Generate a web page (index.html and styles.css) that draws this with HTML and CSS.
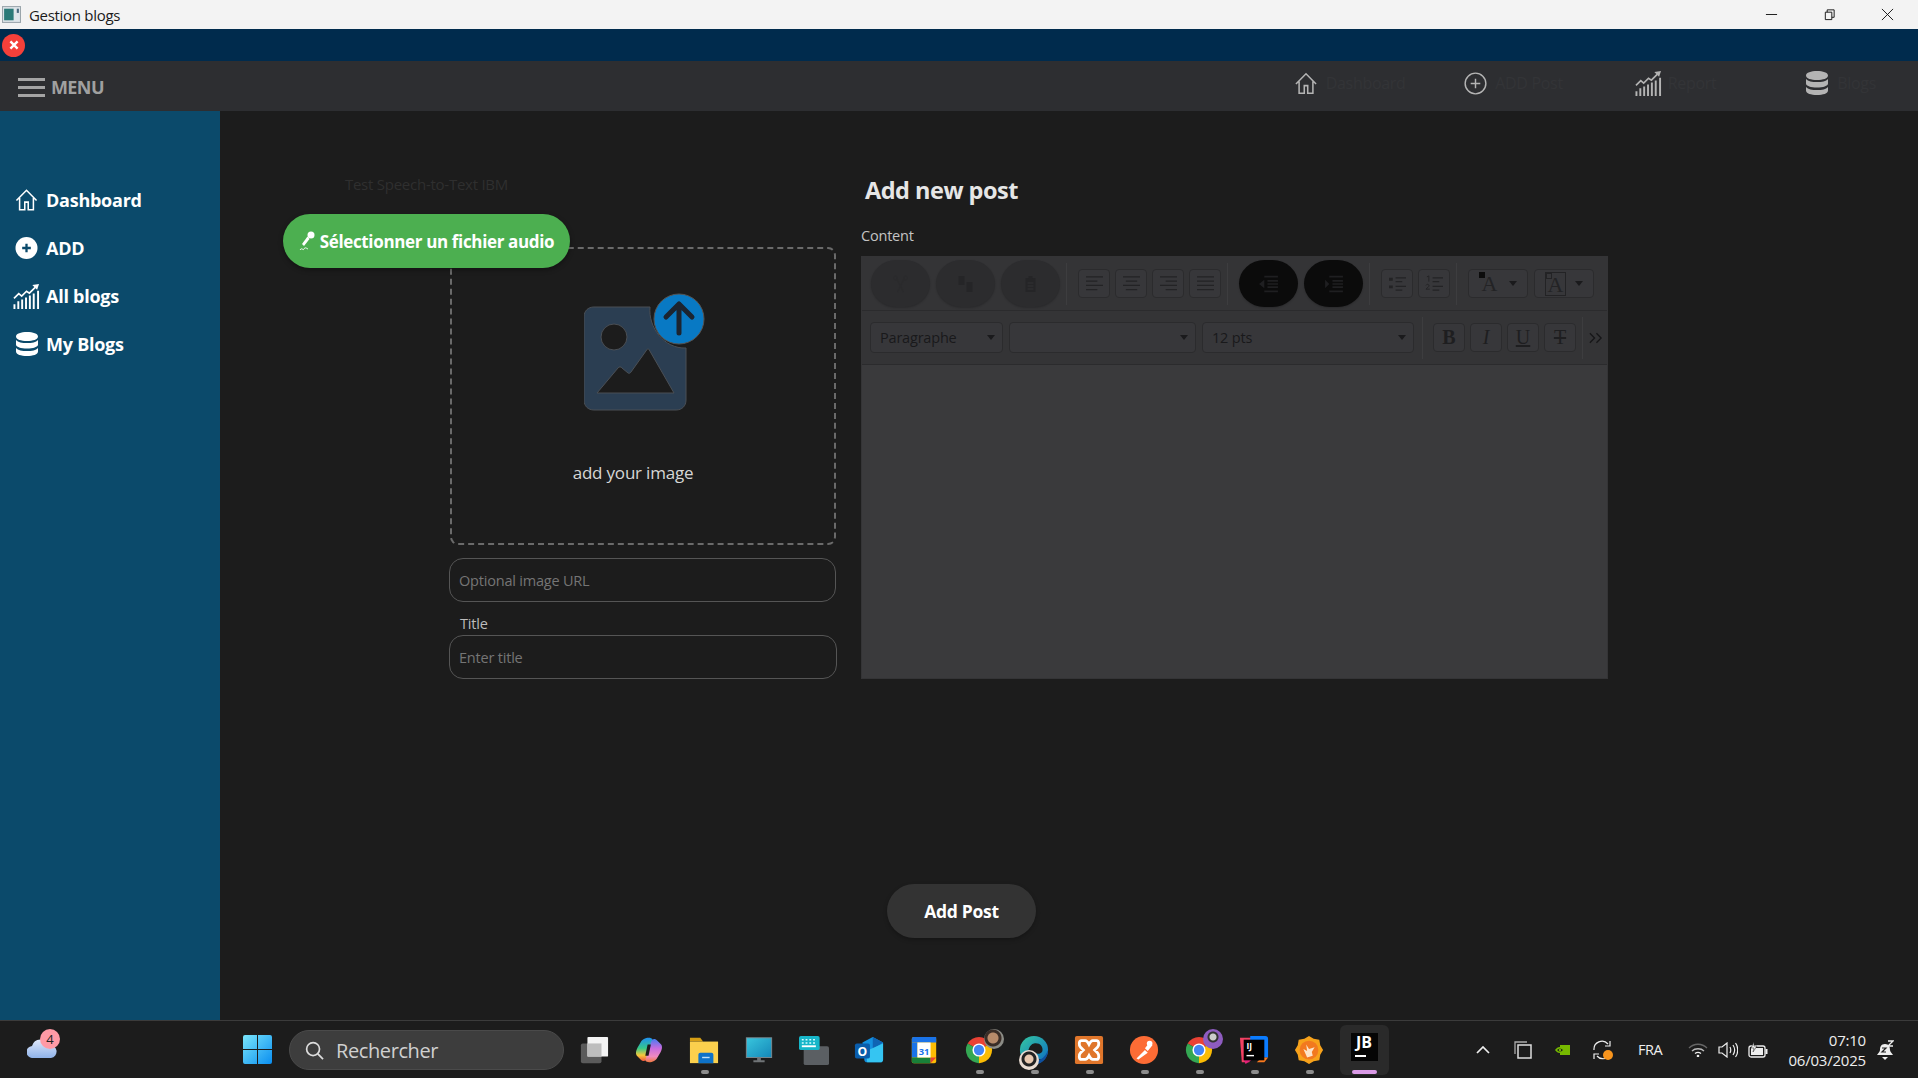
FILE: index.html
```html
<!DOCTYPE html>
<html lang="fr">
<head>
<meta charset="utf-8">
<title>Gestion blogs</title>
<link rel="stylesheet" href="styles.css">
</head>
<body>
<svg class="defs" width="0" height="0" aria-hidden="true">
  <symbol id="i-home" viewBox="0 0 24 24"><path d="M1.500 12.500 12 1.800l10.500 10.700M4.800 10v12.200h5.400v-8h3.600v8h5.400V10" fill="none" stroke="currentColor" stroke-width="1.600"/></symbol>
  <symbol id="i-plus" viewBox="0 0 24 24"><circle cx="12" cy="12" r="10.800" fill="none" stroke="currentColor" stroke-width="1.500"/><path d="M12 7v10M7 12h10" stroke="currentColor" stroke-width="1.500"/></symbol>
  <symbol id="i-plus-solid" viewBox="0 0 24 24"><circle cx="12" cy="12" r="11.500" fill="currentColor"/><path d="M12 7.500v9M7.500 12h9" stroke="#0b4a6b" stroke-width="2.400"/></symbol>
  <symbol id="i-chart" viewBox="0 0 28 28"><path d="M1.500 27v-5M5.500 27v-8M9.500 27V17M13.500 27V15M17.500 27V13M21.500 27V11M26 27V8" fill="none" stroke="currentColor" stroke-width="2"/><path d="M1 16l5-5 3 2.500 5-5 3 2 6-6" fill="none" stroke="currentColor" stroke-width="1.700"/><path d="M27 1l-7 1 5 5z" fill="currentColor"/></symbol>
  <symbol id="i-db" viewBox="0 0 24 26"><path d="M1 5.500C1 2.500 6 1 12 1s11 1.500 11 4.500S18 10 12 10 1 8.500 1 5.500zM1 9c2 2.500 6 3 11 3s9-.5 11-3v4.500c0 2.500-5 4-11 4s-11-1.500-11-4zM1 17c2 2.500 6 3 11 3s9-.5 11-3v3.500c0 3-5 4.500-11 4.500s-11-1.500-11-4.500z" fill="currentColor"/></symbol>
  <symbol id="i-chrome" viewBox="0 0 32 32"><path d="M16 16 3.900 9A14 14 0 0 1 28.100 9z" fill="#e94235"/><path d="M16 16 28.100 9A14 14 0 0 1 16 30z" fill="#fbbc04"/><path d="M16 16V30A14 14 0 0 1 3.900 9z" fill="#34a853"/><circle cx="16" cy="16" r="7" fill="#fff"/><circle cx="16" cy="16" r="5.500" fill="#4285f4"/></symbol>
</svg>

<div class="app-window">
  <header class="titlebar">
    <div class="title-left">
      <svg class="title-icon" viewBox="0 0 18 16"><rect x=".5" y=".5" width="17" height="15" fill="#dfe6ea" stroke="#9aa5ab"/><rect x="2" y="2.500" width="9" height="11" fill="#2b7a78"/><rect x="14" y="2.500" width="2" height="4" fill="#4a6a80"/></svg>
      <span class="title-text">Gestion blogs</span>
    </div>
    <div class="win-controls">
      <svg class="win-btn" viewBox="0 0 14 14"><path d="M1 7h12" stroke="#111" stroke-width="1"/></svg>
      <svg class="win-btn" viewBox="0 0 14 14"><path d="M2.500 4.500h7v8h-7zM4.500 4.500V2h7.500v8h-2.500" fill="none" stroke="#111"/></svg>
      <svg class="win-btn" viewBox="0 0 14 14"><path d="M1 1l12 12M13 1 1 13" stroke="#111"/></svg>
    </div>
  </header>

  <div class="navy-strip">
    <span class="close-dot"><svg viewBox="0 0 10 10"><path d="M2 2l6 6M8 2 2 8" stroke="#fff" stroke-width="2"/></svg></span>
  </div>

  <div class="topbar">
    <div class="menu-toggle">
      <span class="burger"><i></i><i></i><i></i></span>
      <span class="menu-label">MENU</span>
    </div>
    <nav class="top-nav">
      <a class="top-item"><svg class="ti ti-home"><use href="#i-home"/></svg><span>Dashboard</span></a>
      <a class="top-item"><svg class="ti ti-plus"><use href="#i-plus"/></svg><span>ADD Post</span></a>
      <a class="top-item"><svg class="ti ti-chart"><use href="#i-chart"/></svg><span>Report</span></a>
      <a class="top-item"><svg class="ti ti-db"><use href="#i-db"/></svg><span>Blogs</span></a>
    </nav>
  </div>

  <div class="body-row">
    <aside class="sidebar">
      <a class="side-item"><span class="side-ic"><svg class="si-home"><use href="#i-home"/></svg></span>Dashboard</a>
      <a class="side-item"><span class="side-ic"><svg class="si-home"><use href="#i-plus-solid"/></svg></span>ADD</a>
      <a class="side-item"><span class="side-ic"><svg class="si-chart"><use href="#i-chart"/></svg></span>All blogs</a>
      <a class="side-item"><span class="side-ic"><svg class="si-db"><use href="#i-db"/></svg></span>My Blogs</a>
    </aside>

    <main class="main">
      <div class="audio-box">
        <div class="audio-title">Test Speech-to-Text IBM</div>
        <button class="audio-btn">
          <svg class="mic" viewBox="0 0 16 20"><circle cx="12" cy="4" r="3.500" fill="#fff"/><path d="M8.500 5.500 10.500 8 5 15 3 13z" fill="#fff"/><path d="M1 19c2-3 3 1 4-1s2-1 4 0" fill="none" stroke="#fff"/></svg>
          Sélectionner un fichier audio
        </button>
      </div>

      <div class="form-row">
        <section class="col-left">
          <div class="dropzone">
            <svg class="upload" viewBox="0 0 121 118">
              <path d="M10 14h56c-2 20 14 42 36 41v52c0 6-4 10-10 10H10C4 117 0 113 0 107V24C0 18 4 14 10 14z" fill="#2b3e52" stroke="#4a4f55"/>
              <circle cx="30" cy="44" r="13" fill="#1c1c1c" stroke="#4a4f55"/>
              <path d="M13 100 34 75c1-1.500 3-1.500 4 0l6 5c1 .5 2 .5 3-1l16-22.500c.5-.8 1.500-.8 2 0L90 100z" fill="#1c1c1c" stroke="#4a4f55"/>
              <circle cx="95" cy="26" r="25" fill="#0879c4" stroke="#555"/>
              <path d="M95 40V11M82 24 95 11l13 13" fill="none" stroke="#1c2430" stroke-width="5" stroke-linecap="round" stroke-linejoin="round"/>
            </svg>
            <div class="drop-text">add your image</div>
          </div>
          <input class="field" placeholder="Optional image URL">
          <label class="field-label">Title</label>
          <input class="field field-title" placeholder="Enter title">
        </section>

        <section class="col-right">
          <h1 class="heading">Add new post</h1>
          <div class="content-label">Content</div>
          <div class="editor">
            <div class="tb-row tb-one">
              <div class="tb-group gap6">
                <span class="oval"><svg class="oi" viewBox="0 0 20 20"><path d="M6 4l7 14M14 4 7 18" stroke="#2a2a2c" stroke-width="1.200"/><circle cx="5" cy="4" r="2" fill="none" stroke="#2a2a2c"/><circle cx="15" cy="4" r="2" fill="none" stroke="#2a2a2c"/></svg></span>
                <span class="oval"><svg class="oi" viewBox="0 0 20 20"><path d="M3 2h6v9H3zM11 8h6v10h-6z" fill="#252527"/></svg></span>
                <span class="oval"><svg class="oi" viewBox="0 0 20 20"><path d="M5 4h10v14H5z" fill="#252527"/><path d="M8 2h4v3H8z" fill="#252527"/><path d="M7 9h6M7 12h6M7 15h6" stroke="#333335"/></svg></span>
              </div>
              <i class="sep"></i>
              <div class="tb-group gap5">
                <span class="sq"><svg class="li" viewBox="0 0 20 18"><path d="M1 2h18M1 6.500h12M1 11h18M1 15.500h12" stroke="#232325" stroke-width="1.300"/></svg></span>
                <span class="sq"><svg class="li" viewBox="0 0 20 18"><path d="M1 2h18M4 6.500h12M1 11h18M4 15.500h12" stroke="#232325" stroke-width="1.300"/></svg></span>
                <span class="sq"><svg class="li" viewBox="0 0 20 18"><path d="M1 2h18M7 6.500h12M1 11h18M7 15.500h12" stroke="#232325" stroke-width="1.300"/></svg></span>
                <span class="sq"><svg class="li" viewBox="0 0 20 18"><path d="M1 2h18M1 6.500h18M1 11h18M1 15.500h18" stroke="#232325" stroke-width="1.300"/></svg></span>
              </div>
              <i class="sep"></i>
              <div class="tb-group gap6">
                <span class="oval oval-black"><svg class="oi" viewBox="0 0 20 18"><path d="M1 9l5-4v8z" fill="#1f1f21"/><path d="M6 2h13M9 6h10M9 9h10M9 12h10M6 16h13" stroke="#1f1f21" stroke-width="1.500"/></svg></span>
                <span class="oval oval-black"><svg class="oi" viewBox="0 0 20 18"><path d="M6 9 2 5v8z" fill="#1f1f21"/><path d="M6 2h13M9 6h10M9 9h10M9 12h10M6 16h13" stroke="#1f1f21" stroke-width="1.500"/></svg></span>
              </div>
              <i class="sep"></i>
              <div class="tb-group gap5">
                <span class="sq"><svg class="li" viewBox="0 0 20 18"><path d="M1 3h4v3H1zM1 11h4v3H1z" fill="#232325"/><path d="M8 3h11M8 7h7M8 12h11M8 16h7" stroke="#232325" stroke-width="1.300"/></svg></span>
                <span class="sq"><svg class="li" viewBox="0 0 20 18"><path d="M8 3h11M8 7h7M8 12h11M8 16h7" stroke="#232325" stroke-width="1.300"/><path d="M2 2l2-1v6M1 11c1-2 4-1 3 1l-3 3h4" fill="none" stroke="#232325"/></svg></span>
              </div>
              <i class="sep"></i>
              <div class="tb-group gap6">
                <span class="sq sq-wide"><span class="color-a"><i class="swatch"></i>A</span><i class="caret"></i></span>
                <span class="sq sq-wide"><span class="color-a color-box"><i class="swatch swatch-o"></i>A</span><i class="caret"></i></span>
              </div>
            </div>
            <div class="tb-row tb-two">
              <div class="tb-group gap6">
                <span class="sel sel-a">Paragraphe<i class="caret"></i></span>
                <span class="sel sel-b"><i class="caret"></i></span>
                <span class="sel sel-c">12 pts<i class="caret"></i></span>
              </div>
              <i class="sep sep-two"></i>
              <div class="tb-group gap5">
                <span class="sq fmt fmt-b">B</span>
                <span class="sq fmt fmt-i">I</span>
                <span class="sq fmt fmt-u">U</span>
                <span class="sq fmt fmt-s">T</span>
              </div>
              <i class="sep sep-last"></i>
              <svg class="more" viewBox="0 0 16 12"><path d="M2 1l5 5-5 5M9 1l5 5-5 5" fill="none" stroke="#161618" stroke-width="1.400"/></svg>
            </div>
            <div class="edit-area"></div>
          </div>
        </section>
      </div>

      <button class="submit">Add Post</button>
    </main>
  </div>

  <footer class="taskbar">
    <div class="weather">
      <svg class="cloud" viewBox="0 0 30 20"><defs><linearGradient id="gc" x1="0" y1="0" x2="0" y2="1"><stop offset="0" stop-color="#dfe8fb"/><stop offset="1" stop-color="#8fb2e8"/></linearGradient></defs><path d="M6 20a6 6 0 0 1-1-12 9 9 0 0 1 17-1 6.500 6.500 0 0 1 2 13z" fill="url(#gc)"/></svg>
      <span class="badge">4</span>
    </div>
    <svg class="start" viewBox="0 0 29 29"><defs><linearGradient id="gs" x1="0" y1="0" x2="1" y2="1"><stop offset="0" stop-color="#7ae6fb"/><stop offset="1" stop-color="#0a8ef0"/></linearGradient></defs><path d="M0 2a2 2 0 0 1 2-2h12v14H0zM15 0h12a2 2 0 0 1 2 2v12H15zM0 15h14v14H2a2 2 0 0 1-2-2zM15 15h14v12a2 2 0 0 1-2 2H15z" fill="url(#gs)"/></svg>
    <div class="search">
      <svg class="search-ic" viewBox="0 0 20 20"><circle cx="8.500" cy="8.500" r="6.800" fill="none" stroke="#ddd" stroke-width="1.800"/><path d="M13.500 13.500 19 19" stroke="#ddd" stroke-width="1.800"/></svg>
      <span>Rechercher</span>
    </div>
    <div class="apps">
      <span class="tapp"><svg class="ai" viewBox="0 0 32 32"><rect x="2" y="9" width="22" height="21" rx="2" fill="#5b5b5b"/><rect x="9" y="2" width="22" height="21" rx="1" fill="#f4f4f4"/><rect x="9" y="9" width="15" height="14" fill="#bdbdbd"/></svg></span>
      <span class="tapp"><svg class="ai" viewBox="0 0 32 32"><defs><linearGradient id="gp1" x1="0" y1="0" x2="0" y2="1"><stop offset="0" stop-color="#1f8ff0"/><stop offset=".45" stop-color="#35c98a"/><stop offset=".75" stop-color="#f6c93a"/><stop offset="1" stop-color="#f0563b"/></linearGradient><linearGradient id="gp2" x1="0" y1="0" x2="0" y2="1"><stop offset="0" stop-color="#4a7cf0"/><stop offset=".4" stop-color="#c86ce0"/><stop offset=".75" stop-color="#f08ac0"/><stop offset="1" stop-color="#f0783b"/></linearGradient></defs><path d="M7 8c2-5 11-7 13-3l-6 19c-1 4-4 5-7 2l-4-4C1 19 3 15 4 13z" fill="url(#gp1)"/><path d="M25 24c-2 5-11 7-13 3l6-19c1-4 4-5 7-2l4 4c2 3 0 7-1 9z" fill="url(#gp2)"/><path d="M14.500 10h3.500l-2.500 12H12z" fill="#1c1c1c"/></svg></span>
      <span class="tapp run"><svg class="ai" viewBox="0 0 32 32"><path d="M1 3h11l3 4H1z" fill="#d79f15"/><path d="M1 7h30v23H1z" fill="#fbd04d"/><path d="M10 21c0-1 1-2 2-2h12c1 0 2 1 2 2v9H10z" fill="#0e72c8"/><path d="M14 24h8" stroke="#bfe0f7" stroke-width="1.500"/></svg></span>
      <span class="tapp"><svg class="ai" viewBox="0 0 32 32"><defs><linearGradient id="gm" x1="0" y1="0" x2="1" y2="1"><stop offset="0" stop-color="#39c6dd"/><stop offset="1" stop-color="#1487b8"/></linearGradient></defs><rect x="2.500" y="3" width="27" height="21" fill="url(#gm)" stroke="#7d8a90"/><path d="M14 24h4v3h4v2H10v-2h4z" fill="#6f7376"/></svg></span>
      <span class="tapp"><svg class="ai" viewBox="0 0 32 32"><rect x="5" y="12" width="27" height="20" rx="2" fill="#5b5f63"/><rect x="0" y="1" width="22" height="15" rx="2" fill="#17b6c9"/><path d="M3 5h2M7 5h2M11 5h2M15 5h2M3 8.500h2M7 8.500h2M11 8.500h2M15 8.500h2" stroke="#d8fbff" stroke-width="1.500"/><path d="M3 12h15" stroke="#fff" stroke-width="2"/></svg></span>
      <span class="tapp"><svg class="ai" viewBox="0 0 32 32"><path d="M9 8 20 2l11 6v18a3 3 0 0 1-3 3H14a3 3 0 0 1-3-3z" fill="#1490df"/><path d="M20 2l11 6-11 7z" fill="#0f64b4"/><path d="M13 17 31 9v17a3 3 0 0 1-3 3H14z" fill="#35c5f2"/><rect x="1" y="9" width="16" height="16" rx="2" fill="#0a5dab"/><text class="o-letter" x="9" y="22" text-anchor="middle">O</text></svg></span>
      <span class="tapp"><svg class="ai" viewBox="0 0 32 32"><rect x="3" y="2" width="26" height="28" rx="2" fill="#fbbc04"/><path d="M3 4a2 2 0 0 1 2-2h24v6H3z" fill="#1a73e8"/><path d="M3 8h6v16H3z" fill="#1a73e8"/><path d="M3 24h20v6H5a2 2 0 0 1-2-2z" fill="#188038"/><path d="M23 24h6l-6 6z" fill="#ea4335"/><rect x="9" y="8" width="14" height="16" fill="#fff"/><text class="cal" x="16" y="21" text-anchor="middle">31</text></svg></span>
      <span class="tapp run"><svg class="ai" viewBox="0 0 32 32"><use href="#i-chrome"/></svg><i class="avatar avatar-a"></i></span>
      <span class="tapp run"><svg class="ai" viewBox="0 0 32 32"><defs><linearGradient id="ge" x1="0" y1="0" x2="1" y2="1"><stop offset="0" stop-color="#35c8a0"/><stop offset="1" stop-color="#0c6bc4"/></linearGradient></defs><circle cx="16" cy="16" r="15" fill="url(#ge)"/><path d="M16 9c6-1 10 3 9 8-1 3-5 4-9 2 1 5 5 8 9 7-6 5-13 1-15-4-1-5 1-12 6-13z" fill="#1c1c1c"/><path d="M31 16c0 8-6 15-13 15l-2-5c5 2 11 0 15-10z" fill="#0e4f9e"/></svg><i class="avatar avatar-b"></i></span>
      <span class="tapp run"><svg class="ai" viewBox="0 0 32 32"><rect x="1" y="1" width="30" height="30" rx="2" fill="#e0762b"/><path d="M8 6h4c2 0 3 2 4 4 1-2 2-4 4-4h4c3 0 3 5 1 7l-3 3 3 3c2 2 2 7-1 7h-4c-2 0-3-2-4-4-1 2-2 4-4 4H8c-3 0-3-5-1-7l3-3-3-3c-2-2-2-7 1-7z" fill="none" stroke="#fff" stroke-width="3"/></svg></span>
      <span class="tapp run"><svg class="ai" viewBox="0 0 32 32"><circle cx="16" cy="16" r="15" fill="#fd6c35"/><path d="M8 25l9-9 3 3-10 7zM17 14l5-6 3 3-5 6z" fill="#fff"/><circle cx="22" cy="9" r="3" fill="#fff"/></svg></span>
      <span class="tapp run"><svg class="ai" viewBox="0 0 32 32"><use href="#i-chrome"/></svg><i class="avatar avatar-c"></i></span>
      <span class="tapp run"><svg class="ai" viewBox="0 0 32 32"><path d="M1 3h12l-2 26H3z" fill="#f24063"/><path d="M12 1h16a3 3 0 0 1 3 3v20H12z" fill="#0b7cff"/><path d="M24 24h7l-4 5h-8z" fill="#f97a1f"/><path d="M4 24l9 3-6 4z" fill="#e5207b"/><rect x="5" y="5" width="22" height="22" fill="#000"/><text class="ij" x="8" y="15">IJ</text><path d="M8 22h8" stroke="#fff" stroke-width="1.500"/></svg></span>
      <span class="tapp run"><svg class="ai" viewBox="0 0 32 32"><path d="M16 1l5 3 6 1 1 6 3 5-3 5-1 6-6 1-5 3-5-3-6-1-1-6-3-5 3-5 1-6 6-1z" fill="#f7a21b"/><circle cx="16" cy="16" r="10" fill="#f2791f"/><path d="M10 15l4 2-1-7 3 5 6-2-3 5 1 4-6 2z" fill="#fde3c9"/></svg></span>
      <span class="tapp run run-pink"><span class="jb"><b>JB</b></span></span>
    </div>
    <div class="tray">
      <svg class="t-chev" viewBox="0 0 14 8"><path d="M1 7l6-6 6 6" fill="none" stroke="#eee" stroke-width="1.700"/></svg>
      <svg class="t-copy" viewBox="0 0 18 18"><path d="M1 13V1h12" fill="none" stroke="#aaa" stroke-width="1.300"/><rect x="4" y="4" width="13" height="13" fill="none" stroke="#ddd" stroke-width="1.500"/></svg>
      <svg class="t-nv" viewBox="0 0 15 10"><rect x="5" width="10" height="10" fill="#76b900"/><path d="M0 5c3-4 6-4 9 0-3 4-6 4-9 0z" fill="#76b900"/><path d="M2 5c2-2 4-2 6 0-2 2-4 2-6 0z" fill="#1c1c1c"/><circle cx="5" cy="5" r="1.200" fill="#76b900"/></svg>
      <svg class="t-sync" viewBox="0 0 20 20"><path d="M1 10a8 8 0 0 1 14-6M15 17a8 8 0 0 1-11-1" fill="none" stroke="#eee" stroke-width="1.200"/><path d="M17 1v5h-5M1 19v-5h5" fill="none" stroke="#eee" stroke-width="1.200"/><circle cx="15" cy="15" r="5" fill="#f7941d"/></svg>
      <span class="t-lang">FRA</span>
      <svg class="t-wifi" viewBox="0 0 20 14"><path d="M1 5c5-5 13-5 18 0" fill="none" stroke="#666" stroke-width="1.300"/><path d="M4 8c3-3 9-3 12 0" fill="none" stroke="#bbb" stroke-width="1.300"/><path d="M7 10.500c2-1.500 4-1.500 6 0" fill="none" stroke="#eee" stroke-width="1.300"/><circle cx="10" cy="13" r="1.300" fill="#eee"/></svg>
      <svg class="t-vol" viewBox="0 0 20 16"><path d="M1 5h3l5-4v14l-5-4H1z" fill="none" stroke="#eee" stroke-width="1.200"/><path d="M12 5c1 2 1 4 0 6M15 3c2 3 2 7 0 10M17.500 1c3 4 3 10 0 14" fill="none" stroke="#eee" stroke-width="1.200"/></svg>
      <svg class="t-bat" viewBox="0 0 20 16"><rect x="1" y="4" width="16" height="11" rx="2" fill="none" stroke="#eee" stroke-width="1.300"/><rect x="3" y="6" width="12" height="7" fill="#eee"/><rect x="17.500" y="7" width="2" height="5" fill="#eee"/><path d="M6 0 3 6h3l-1 4 4-6H6z" fill="#eee" stroke="#1c1c1c" stroke-width=".5"/></svg>
      <div class="clock"><span>07:10</span><span>06/03/2025</span></div>
      <svg class="t-bell" viewBox="0 0 18 20"><path d="M9 4c-4 0-5 3-5 6 0 2-2 3-3 5h16c-1-2-3-3-3-5 0-3-1-6-5-6z" fill="#eee"/><path d="M6 17h6l-3 3z" fill="#eee"/><path d="M12 1h5l-5 5h5" fill="none" stroke="#eee" stroke-width="1.300"/><path d="M6 8h4l-4 4h4" fill="none" stroke="#1c1c1c" stroke-width="1.200"/></svg>
    </div>
  </footer>
</div>
</body>
</html>
```

FILE: styles.css
```css
* { box-sizing: border-box; }
html, body { margin: 0; padding: 0; height: 100%; overflow: hidden; background: #1c1c1c; }
body { font-family: "Open Sans", "Noto Sans", sans-serif; }
.defs { position: absolute; }
.app-window { width: 1918px; height: 1078px; display: flex; flex-direction: column; }

/* Title bar */
.titlebar { height: 29px; background: #f3f3f3; display: flex; align-items: center; justify-content: space-between; flex: none; }
.title-left { display: flex; align-items: center; padding-left: 2px; }
.title-icon { width: 19px; height: 17px; }
.title-text { margin-left: 8px; font-size: 15px; color: #1a1a1a; letter-spacing: -0.3px; }
.win-controls { display: flex; gap: 45px; padding-right: 24px; }
.win-btn { width: 13px; height: 13px; }

/* Navy strip */
.navy-strip { height: 32px; background: #002b4d; display: flex; align-items: center; padding-left: 2px; flex: none; }
.close-dot { width: 23px; height: 23px; border-radius: 50%; background: #f4403a; display: flex; align-items: center; justify-content: center; }
.close-dot svg { width: 12px; height: 12px; }

/* Top bar */
.topbar { height: 50px; background: #2d2e31; display: flex; align-items: center; padding-left: 18px; flex: none; }
.menu-toggle { display: flex; align-items: center; gap: 6px; color: #a0a0a0; margin-top: 2px; }
.burger { display: flex; flex-direction: column; justify-content: space-between; width: 27px; height: 19px; }
.burger i { display: block; height: 3px; background: #a4a4a4; }
.menu-label { font-size: 18px; font-weight: 700; letter-spacing: -0.6px; }
.top-nav { margin: 0 0 6px auto; padding-right: 42px; display: grid; grid-template-columns: repeat(3, 170.5px) auto; align-items: center; }
.top-item { display: flex; align-items: center; color: #333437; font-size: 16px; letter-spacing: -0.3px; }
.ti { color: #b4b4b4; flex: none; }
.ti-home { width: 24px; height: 23px; margin-right: 8px; }
.ti-plus { width: 23px; height: 23px; margin-right: 8px; }
.ti-chart { width: 27px; height: 27px; margin-right: 6px; }
.ti-db { width: 24px; height: 26px; margin-right: 8px; }

/* Body */
.body-row { flex: 1; min-height: 0; display: flex; }
.sidebar { width: 220px; flex: none; background: #0b4a6b; padding: 65px 0 0 13px; }
.side-item { display: flex; align-items: center; height: 48px; color: #fff; font-size: 18px; font-weight: 700; letter-spacing: -0.25px; }
.side-ic { width: 33px; flex: none; display: flex; justify-content: center; padding-right: 6px; }
.side-ic svg { color: #fff; }
.si-home { width: 23px; height: 24px; }
.si-chart { width: 27px; height: 27px; }
.si-db { width: 24px; height: 26px; }

/* Main */
.main { flex: 1; position: relative; background: #1c1c1c; padding: 0 0 0 229px; }
.audio-box { position: absolute; left: 63px; top: 63px; width: 287px; display: flex; flex-direction: column; align-items: center; gap: 20px; z-index: 2; }
.audio-title { color: #2f2f2f; font-size: 15px; letter-spacing: -0.25px; }
.audio-btn { width: 287px; height: 54px; border: 0; border-radius: 27px; background: #4caf50; color: #fff; font: 700 17px "Open Sans", sans-serif; letter-spacing: -0.35px; display: flex; align-items: center; justify-content: center; gap: 5px; box-shadow: 0 2px 5px rgba(0,0,0,.35); }
.mic { width: 16px; height: 20px; }

.form-row { display: flex; gap: 25px; align-items: flex-start; }
.col-left { width: 387px; padding-top: 136px; flex: none; }
.dropzone { height: 298px; border: 2px dashed #6a6a6a; border-radius: 8px; display: flex; flex-direction: column; align-items: center; margin-left: 1px; }
.upload { width: 121px; height: 118px; margin: 44px 0 0 3px; flex: none; }
.drop-text { color: #d6d6d6; font-size: 17px; line-height: 24px; margin: 50px 0 0 -20px; letter-spacing: -0.2px; }
.field { display: block; width: 100%; height: 44px; margin-top: 13px; background: transparent; border: 1.500px solid #555; border-radius: 14px; padding: 0 9px; color: #ccc; font: 14.500px "Open Sans", sans-serif; outline: none; letter-spacing: -0.2px; }
.field::placeholder { color: #757575; opacity: 1; }
.field-label { display: block; color: #bdbdbd; font-size: 14.500px; line-height: 20px; margin: 12px 0 1px 11px; letter-spacing: -0.2px; }
.field-title { margin-top: 0; height: 44px; width: 388px; }

.col-right { width: 747px; padding-top: 63px; }
.heading { margin: 0 0 0 4px; color: #e6e6e6; font-size: 23.500px; font-weight: 700; line-height: 32px; letter-spacing: -0.5px; }
.content-label { color: #c4c4c4; font-size: 14.500px; line-height: 20px; margin-top: 20px; letter-spacing: -0.2px; }
.editor { margin-top: 10px; height: 423px; display: flex; flex-direction: column; background: #3a3a3c; border: 1px solid #343436; }

.tb-row { display: flex; align-items: center; background: #343436; padding-left: 9px; flex: none; }
.tb-one { height: 54px; border-bottom: 1px solid #2b2b2d; }
.tb-two { height: 54px; border-bottom: 1px solid #2b2b2d; padding-left: 8px; }
.tb-group { display: flex; align-items: center; }
.gap5 { gap: 5px; }
.gap6 { gap: 6px; }
.sep { display: block; width: 1px; height: 42px; background: #3d3d3f; margin: 0 11px 0 6px; flex: none; }
.sep-two { margin: 0 10px 0 8px; }
.sep-last { margin: 0 5px 0 6px; }
.oval { width: 59px; height: 47px; border-radius: 26px / 24px; background: #2c2c2e; display: flex; align-items: center; justify-content: center; box-shadow: 0 1px 2px rgba(0,0,0,.2); }
.oval-black { background: #0b0b0b; }
.oi { width: 21px; height: 20px; }
.sq { width: 32px; height: 29px; border: 1px solid #2b2b2d; border-radius: 4px; background: #37373a; display: flex; align-items: center; justify-content: center; color: #232325; }
.sq-wide { width: 60px; gap: 9px; }
.li { width: 19px; height: 17px; }
.caret { display: block; width: 0; height: 0; border-left: 4px solid transparent; border-right: 4px solid transparent; border-top: 5px solid #1a1a1c; }
.color-a { position: relative; width: 21px; height: 24px; font: 22px/24px "Liberation Serif", serif; color: #232325; text-align: center; }
.swatch { position: absolute; left: 0; top: 0; width: 6px; height: 6px; background: #0c0c0c; }
.swatch-o { background: transparent; border: 1px solid #232325; }
.color-box { border: 1px solid #232325; }
.sel { height: 31px; border: 1px solid #2b2b2d; border-radius: 4px; background: #37373a; display: flex; align-items: center; justify-content: space-between; padding: 0 7px 0 9px; color: #19191b; font-size: 14.500px; letter-spacing: -0.2px; }
.sel-a { width: 133px; }
.sel-b { width: 187px; justify-content: flex-end; }
.sel-c { width: 212px; }
.fmt { font: 20px "Liberation Serif", serif; color: #1e1e20; }
.fmt-b { font-weight: 700; }
.fmt-i { font-style: italic; }
.fmt-u { text-decoration: underline; }
.fmt-s { text-decoration: line-through; }
.more { width: 15px; height: 12px; }
.edit-area { flex: 1; background: #3a3a3c; }

.submit { display: block; width: 149px; height: 54px; margin: 205px 0 0 438px; border: 0; border-radius: 27px; background: #333; color: #fff; font: 700 17.500px "Open Sans", sans-serif; letter-spacing: -0.3px; box-shadow: 0 2px 4px rgba(0,0,0,.25); }

/* Taskbar */
.taskbar { height: 58px; flex: none; background: #1c1c1c; border-top: 1px solid #3b3b3b; display: flex; align-items: center; padding-left: 27px; }
.weather { position: relative; width: 30px; height: 20px; margin-top: -3px; flex: none; }
.cloud { width: 30px; height: 20px; display: block; }
.badge { position: absolute; left: 13px; top: -9px; width: 20px; height: 20px; border-radius: 50%; background: #ff9aa6; color: #222; font-size: 13px; line-height: 20px; text-align: center; }
.start { width: 29px; height: 29px; margin-left: 186px; flex: none; }
.search { width: 275px; height: 40px; margin-left: 17px; border-radius: 20px; background: #3d3d3d; border: 1px solid #4a4a4a; display: flex; align-items: center; padding: 2px 0 0 15px; color: #d0d0d0; font-size: 20px; letter-spacing: -0.4px; flex: none; }
.search-ic { width: 19px; height: 19px; margin-right: 12px; }
.apps { display: flex; margin-left: 2.500px; flex: none; }
.tapp { position: relative; width: 55px; height: 50px; display: flex; align-items: center; justify-content: center; }
.ai { width: 30px; height: 30px; }
.run::after { content: ""; position: absolute; left: 24px; bottom: 1px; width: 8px; height: 4px; border-radius: 2px; background: #8c8c8c; }
.run-pink::after { left: 15px; width: 25px; background: #d99ae6; }
.jb { width: 49px; height: 50px; border-radius: 6px; background: #2a2a2a; display: flex; align-items: center; justify-content: center; }
.jb b { display: block; width: 27px; height: 28px; background: #050505; color: #fff; font-size: 16px; line-height: 19px; text-align: center; font-weight: 700; margin-bottom: 6px; position: relative; }
.jb b::after { content: ""; position: absolute; left: 4px; bottom: 4px; width: 11px; height: 2px; background: #fff; }
.avatar { position: absolute; width: 20px; height: 20px; border-radius: 50%; }
.avatar-a { left: 32px; top: 4px; background: radial-gradient(circle at 45% 45%, #b78a6a 0 5px, #3a2d27 6px 8px, #8c8c86 9px); }
.avatar-b { left: 12px; top: 25px; background: radial-gradient(circle at 50% 45%, #e8c9b0 0 4px, #222 5px 7px, #e9dcd2 8px); }
.avatar-c { left: 31px; top: 4px; background: radial-gradient(circle at 50% 40%, #ccc 0 3px, #333 4px 5px, #8e5cc0 6px); }
.o-letter { font: 700 13px "Open Sans", sans-serif; fill: #fff; }
.cal { font: 700 10px "Open Sans", sans-serif; fill: #1a73e8; }
.ij { font: 700 9px "Open Sans", sans-serif; fill: #fff; }

.tray { margin-left: auto; display: flex; align-items: center; color: #eee; padding-right: 24px; }
.t-chev { width: 14px; height: 8px; }
.t-copy { width: 18px; height: 18px; margin-left: 24px; }
.t-nv { width: 15px; height: 10px; margin-left: 23px; }
.t-sync { width: 20px; height: 20px; margin-left: 23px; }
.t-lang { font-size: 14.500px; margin-left: 25px; width: 26px; letter-spacing: -0.5px; }
.t-wifi { width: 20px; height: 14px; margin-left: 24px; }
.t-vol { width: 20px; height: 16px; margin-left: 10px; }
.t-bat { width: 20px; height: 18px; margin-left: 10px; }
.clock { display: flex; flex-direction: column; align-items: flex-end; margin-left: 20px; width: 78px; font-size: 15px; line-height: 20px; letter-spacing: -0.2px; }
.t-bell { width: 18px; height: 20px; margin-left: 10px; }
```
